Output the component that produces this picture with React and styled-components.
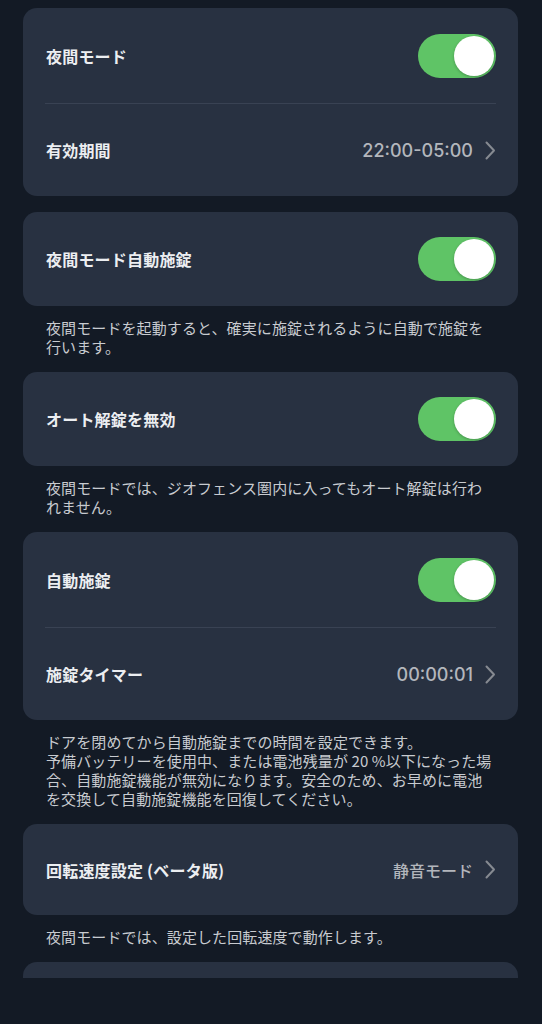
import React from "react";
import styled, { createGlobalStyle } from "styled-components";

const Global = createGlobalStyle`
  html, body { margin: 0; padding: 0; background: #131a25; }
  body { font-family: Inter, "Noto Sans CJK JP", sans-serif; -webkit-font-smoothing: antialiased; }
`;

const Screen = styled.div`
  width: 542px;
  height: 1024px;
  background: #131a25;
  display: flex;
  flex-direction: column;
  overflow: hidden;
`;

const Scroll = styled.div`
  height: 978px;
  flex: none;
  overflow: hidden;
  padding: 8px 24px 0 23px;
  box-sizing: border-box;
  display: flex;
  flex-direction: column;
  gap: 16px;
`;

const Group = styled.section`
  display: flex;
  flex-direction: column;
`;

const Card = styled.div`
  background: #283141;
  border-radius: 14px;
  display: flex;
  flex-direction: column;
  flex: none;
`;

const Row = styled.div`
  height: ${(p) => p.$h || 94}px;
  display: flex;
  align-items: center;
  justify-content: space-between;
  padding: 0 22px 0 23px;
`;

const Divider = styled.div`
  height: 1px;
  margin: 0 22px 0 22px;
  background: #394253;
`;

const Title = styled.span`
  font-family: "Noto Sans CJK JP", sans-serif;
  font-weight: 700;
  font-size: 16px;
  letter-spacing: 0.2px;
  color: #eceef1;
`;

const Trail = styled.div`
  display: flex;
  align-items: center;
  gap: 12px;
`;

const Value = styled.span`
  font-family: ${(p) => (p.$num ? `Inter, "Noto Sans CJK JP", sans-serif` : `"Noto Sans CJK JP", sans-serif`)};
  font-size: ${(p) => (p.$num ? 18 : 16)}px;
  font-weight: 500;
  color: #b3b6bc;
`;

const Track = styled.div`
  width: 78px;
  height: 44px;
  border-radius: 22px;
  background: #5fc466;
  display: flex;
  align-items: center;
  justify-content: flex-end;
  padding: 0 2px;
  box-sizing: border-box;
`;

const Knob = styled.div`
  width: 40px;
  height: 40px;
  border-radius: 50%;
  background: #ffffff;
  box-shadow: 0 1px 3px rgba(0, 0, 0, 0.25);
`;

const Note = styled.div`
  padding: 12px 0 0 23px;
  font-family: "Noto Sans CJK JP", sans-serif;
  font-size: 15px;
  line-height: 19px;
  letter-spacing: 0.1px;
  color: #c8cbd0;
`;

const Line = styled.span`
  display: block;
  white-space: nowrap;
`;

const Bottom = styled.div`
  flex: 1;
  background: #131a25;
`;

const Chevron = () => (
  <svg width="11" height="19" viewBox="0 0 11 19" fill="none">
    <path d="M1.5 1.5 L9 9.5 L1.5 17.5" stroke="#868a91" strokeWidth="2" strokeLinecap="round" strokeLinejoin="round" />
  </svg>
);

const Toggle = () => (
  <Track>
    <Knob />
  </Track>
);

const LinkValue = ({ children, num }) => (
  <Trail>
    <Value $num={num}>{children}</Value>
    <Chevron />
  </Trail>
);

export default function App() {
  return (
    <>
      <Global />
      <Screen>
        <Scroll>
          <Group>
            <Card>
              <Row $h={95}>
                <Title>夜間モード</Title>
                <Toggle />
              </Row>
              <Divider />
              <Row $h={92}>
                <Title>有効期間</Title>
                <LinkValue num>22:00-05:00</LinkValue>
              </Row>
            </Card>
          </Group>

          <Group>
            <Card>
              <Row $h={94}>
                <Title>夜間モード自動施錠</Title>
                <Toggle />
              </Row>
            </Card>
            <Note>
              <Line>夜間モードを起動すると、確実に施錠されるように自動で施錠を</Line>
              <Line>行います。</Line>
            </Note>
          </Group>

          <Group>
            <Card>
              <Row $h={94}>
                <Title>オート解錠を無効</Title>
                <Toggle />
              </Row>
            </Card>
            <Note>
              <Line>夜間モードでは、ジオフェンス圏内に入ってもオート解錠は行わ</Line>
              <Line>れません。</Line>
            </Note>
          </Group>

          <Group>
            <Card>
              <Row $h={95}>
                <Title>自動施錠</Title>
                <Toggle />
              </Row>
              <Divider />
              <Row $h={92}>
                <Title>施錠タイマー</Title>
                <LinkValue num>00:00:01</LinkValue>
              </Row>
            </Card>
            <Note>
              <Line>ドアを閉めてから自動施錠までの時間を設定できます。</Line>
              <Line>予備バッテリーを使用中、または電池残量が 20 %以下になった場</Line>
              <Line>合、自動施錠機能が無効になります。安全のため、お早めに電池</Line>
              <Line>を交換して自動施錠機能を回復してください。</Line>
            </Note>
          </Group>

          <Group>
            <Card>
              <Row $h={91}>
                <Title>回転速度設定 (ベータ版)</Title>
                <LinkValue>静音モード</LinkValue>
              </Row>
            </Card>
            <Note>
              <Line>夜間モードでは、設定した回転速度で動作します。</Line>
            </Note>
          </Group>

          <Group>
            <Card>
              <Row $h={94} />
            </Card>
          </Group>
        </Scroll>
        <Bottom />
      </Screen>
    </>
  );
}
